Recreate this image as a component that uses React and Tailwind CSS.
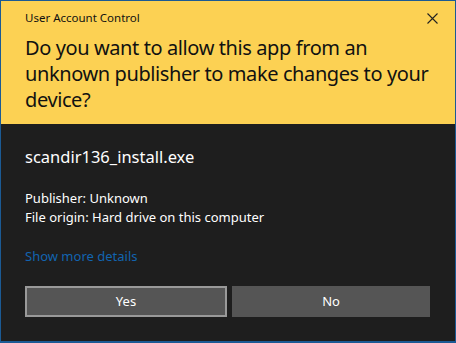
import React from 'react';

const font = { fontFamily: '"Segoe UI", "Noto Sans", "Open Sans", sans-serif' };

/**
 * UAC prompt: yellow warning header over dark body with Yes / No buttons.
 */
export default function App() {
  return (
    <div
      className="w-[456px] h-[343px] flex flex-col bg-[#1e1e1e] border border-b-2 border-[#1b5a94] overflow-hidden"
      style={font}
    >
      {/* Header */}
      <div className="h-[123px] bg-[#fcd153] pl-6 pr-4 pt-2 text-[#111]">
        <div className="flex items-center justify-between h-[18px]">
          <span className="text-[11.5px]">User Account Control</span>
          <svg width="11" height="11" viewBox="0 0 11 11" className="mr-[1px]">
            <path d="M0.5 0.5L10.5 10.5M10.5 0.5L0.5 10.5" stroke="#222" strokeWidth="1.1" />
          </svg>
        </div>
        <p className="mt-2 text-[20px] leading-[26px] tracking-[-0.4px]">
          Do you want to allow this app from an unknown publisher to make changes to your device?
        </p>
      </div>

      {/* Body */}
      <div className="flex-1 flex flex-col px-6 text-white">
        <div className="mt-[22px] text-[16.5px] leading-[21px]">scandir136_install.exe</div>
        <div className="mt-[22px] text-[13px] leading-[19px]">
          <div>Publisher: Unknown</div>
          <div>File origin: Hard drive on this computer</div>
        </div>
        <div className="mt-[20px] text-[13px] leading-[19px] text-[#1264b0]">Show more details</div>
        <div className="mt-[20px] flex gap-[5px] w-[405px]">
          <button className="flex-1 h-[31px] bg-[#555] border-2 border-[#999] text-white text-[13px]">
            Yes
          </button>
          <button className="flex-1 h-[31px] bg-[#555] text-white text-[13px]">No</button>
        </div>
      </div>
    </div>
  );
}
